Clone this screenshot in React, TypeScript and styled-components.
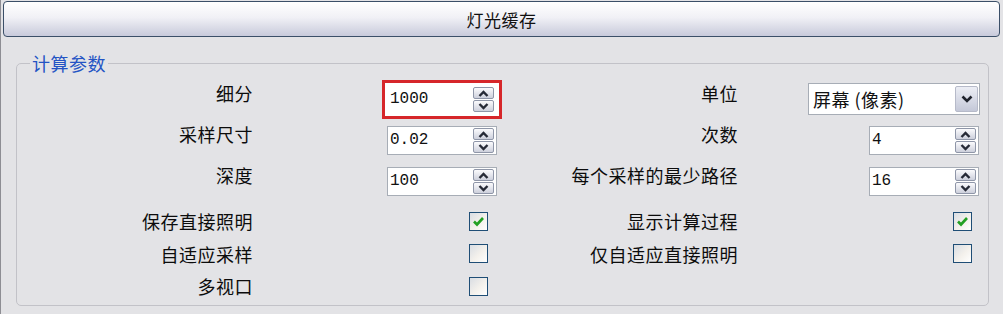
import styled, { createGlobalStyle } from 'styled-components';

const GlobalStyle = createGlobalStyle`
  html, body {
    margin: 0;
    padding: 0;
    background: #e3e3e6;
  }
  body {
    font-family: "Noto Sans CJK SC", "Liberation Sans", sans-serif;
    color: #111;
  }
`;

const Panel = styled.div`
  width: 1003px;
  height: 314px;
  box-sizing: border-box;
  border-left: 1px solid #8e8e94;
  padding: 1px 3px 0 2px;
  background: #e3e3e6;
`;

const TitleBar = styled.div`
  height: 36px;
  box-sizing: border-box;
  border: 1px solid #3b4f68;
  border-radius: 4px;
  background: linear-gradient(#ffffff 0%, #f1f1f6 45%, #c8cadb 100%);
  display: flex;
  align-items: center;
  justify-content: center;
  font-size: 17px;
  letter-spacing: 0.5px;
  color: #111;
`;

const Group = styled.fieldset`
  margin: 16px 11px 0 13px;
  padding: 10px 0 3px 0;
  border: 1px solid #c2c2c8;
  border-radius: 5px;
  min-width: 0;
`;

const Legend = styled.legend`
  margin-left: 13px;
  padding: 0 2px;
  font-size: 18px;
  line-height: 20px;
  letter-spacing: 0.5px;
  color: #2454c4;
`;

const Fields = styled.div`
  display: grid;
  grid-template-columns: 236px 244px 241px 242px;
  grid-template-rows: 41px 41px 40px 32px 33px 32px;
`;

const Label = styled.div<{ $middle?: boolean }>`
  justify-self: end;
  align-self: ${p => (p.$middle ? 'center' : 'start')};
  font-size: 18px;
  line-height: 20px;
  letter-spacing: 0.5px;
  white-space: nowrap;
  color: #0c0c0c;
`;

const SpinBox = styled.div<{ $highlight?: boolean; $inset?: number }>`
  justify-self: end;
  align-self: start;
  margin-top: 2px;
  margin-right: ${p => p.$inset ?? 0}px;
  width: 110px;
  height: 29px;
  box-sizing: border-box;
  display: flex;
  align-items: center;
  background: #fff;
  border: 1px solid ${p => (p.$highlight ? '#fff' : '#a7adb6')};
  box-shadow: ${p => (p.$highlight ? '0 0 0 2px #fff, 0 0 0 5px #d6262a' : 'none')};
`;

const SpinValue = styled.span`
  flex: 1;
  padding-left: 2px;
  font-family: "Liberation Mono", monospace;
  font-size: 16px;
  line-height: 27px;
  color: #111;
`;

const Arrows = styled.div`
  display: flex;
  flex-direction: column;
  gap: 1px;
  margin-right: 2px;
`;

const ArrowButton = styled.div`
  width: 21px;
  height: 12px;
  box-sizing: border-box;
  border: 1px solid #8f96a8;
  border-radius: 2px;
  background: linear-gradient(#fbfbfd, #cdd0dc);
  display: grid;
  place-items: center;
`;

const Select = styled.div`
  justify-self: end;
  align-self: start;
  width: 172px;
  height: 32px;
  box-sizing: border-box;
  display: flex;
  background: #fff;
  border: 1px solid #a7adb6;
`;

const SelectText = styled.span`
  flex: 1;
  padding-left: 4px;
  font-size: 18px;
  line-height: 30px;
  letter-spacing: 0.5px;
  white-space: nowrap;
`;

const SelectButton = styled.div`
  width: 23px;
  margin: 2px 1px 2px 0;
  box-sizing: border-box;
  border: 1px solid #b6bac9;
  border-radius: 2px;
  background: linear-gradient(#eceef5, #c4c8d8);
  display: grid;
  place-items: center;
`;

const CheckBox = styled.div<{ $inset: number }>`
  justify-self: end;
  align-self: center;
  margin-right: ${p => p.$inset}px;
  width: 19px;
  height: 19px;
  box-sizing: border-box;
  border: 1px solid #1f4e76;
  background: linear-gradient(135deg, #d9dde3 0%, #f4f1ec 55%, #ffffff 100%);
  display: grid;
  place-items: center;
`;

const Chevron = ({ up }: { up?: boolean }) => (
  <svg width="11" height="7" viewBox="0 0 11 7">
    <polyline
      points={up ? '1.5,6 5.5,2 9.5,6' : '1.5,1 5.5,5 9.5,1'}
      fill="none"
      stroke="#262a36"
      strokeWidth="2.4"
    />
  </svg>
);

const Spin = ({ value, highlight, inset }: { value: string; highlight?: boolean; inset?: number }) => (
  <SpinBox $highlight={highlight} $inset={inset}>
    <SpinValue>{value}</SpinValue>
    <Arrows>
      <ArrowButton>
        <Chevron up />
      </ArrowButton>
      <ArrowButton>
        <Chevron />
      </ArrowButton>
    </Arrows>
  </SpinBox>
);

const Check = ({ checked, inset }: { checked?: boolean; inset: number }) => (
  <CheckBox $inset={inset}>
    {checked && (
      <svg width="13" height="11" viewBox="0 0 13 11">
        <polyline points="2,5.5 5,8.5 11,2" fill="none" stroke="#23a023" strokeWidth="2.6" />
      </svg>
    )}
  </CheckBox>
);

export default function App() {
  return (
    <>
      <GlobalStyle />
      <Panel>
        <TitleBar>灯光缓存</TitleBar>
        <Group>
          <Legend>计算参数</Legend>
          <Fields>
            <Label>细分</Label>
            <Spin value="1000" highlight />
            <Label>单位</Label>
            <Select>
              <SelectText>屏幕 (像素)</SelectText>
              <SelectButton>
                <svg width="12" height="8" viewBox="0 0 12 8">
                  <polyline points="1.5,1.5 6,6 10.5,1.5" fill="none" stroke="#20242e" strokeWidth="2.6" />
                </svg>
              </SelectButton>
            </Select>

            <Label>采样尺寸</Label>
            <Spin value="0.02" />
            <Label>次数</Label>
            <Spin value="4" inset={1} />

            <Label>深度</Label>
            <Spin value="100" />
            <Label>每个采样的最少路径</Label>
            <Spin value="16" inset={1} />

            <Label $middle>保存直接照明</Label>
            <Check checked inset={9} />
            <Label $middle>显示计算过程</Label>
            <Check checked inset={8} />

            <Label $middle>自适应采样</Label>
            <Check inset={9} />
            <Label $middle>仅自适应直接照明</Label>
            <Check inset={8} />

            <Label $middle>多视口</Label>
            <Check inset={9} />
          </Fields>
        </Group>
      </Panel>
    </>
  );
}
